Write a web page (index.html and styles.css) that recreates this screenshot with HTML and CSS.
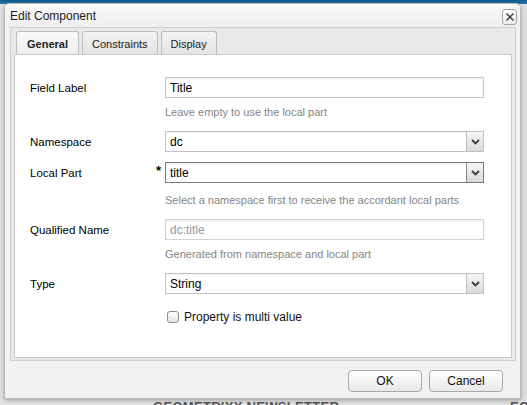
FILE: index.html
```html
<!DOCTYPE html>
<html>
<head>
<meta charset="utf-8">
<link rel="stylesheet" href="styles.css">
</head>
<body>
<div class="page">
  <div class="topbar"></div>
  <div class="behind-bottom"><span class="news">GEOMETRIXX NEWSLETTER</span><span class="news news-r">EO</span></div>

  <div class="dialog">
    <div class="dlg-head">
      <span class="dlg-title">Edit Component</span>
      <div class="close">
        <svg width="10" height="10" viewBox="0 0 10 10"><path d="M1.5 1.5 L8.5 8.5 M8.5 1.5 L1.5 8.5" stroke="#3a3a3a" stroke-width="1.4" fill="none"/></svg>
      </div>
    </div>

    <div class="panel">
      <div class="tabs">
        <div class="tab active">General</div>
        <div class="tab">Constraints</div>
        <div class="tab">Display</div>
      </div>
      <div class="tab-body">
        <div class="form">
          <div class="row">
            <div class="label">Field Label</div>
            <div class="field input">Title</div>
          </div>
          <div class="help help-a">Leave empty to use the local part</div>

          <div class="row row-gap-a">
            <div class="label">Namespace</div>
            <div class="field select"><span class="val">dc</span><span class="arrow"><svg width="9" height="6" viewBox="0 0 9 6"><path d="M1 1 L4.5 4.5 L8 1" stroke="#3c3c3c" stroke-width="1.8" fill="none"/></svg></span></div>
          </div>
          <div class="row row-gap-b">
            <div class="label">Local Part<span class="req">*</span></div>
            <div class="field select focus"><span class="val">title</span><span class="arrow"><svg width="9" height="6" viewBox="0 0 9 6"><path d="M1 1 L4.5 4.5 L8 1" stroke="#3c3c3c" stroke-width="1.8" fill="none"/></svg></span></div>
          </div>
          <div class="help help-b">Select a namespace first to receive the accordant local parts</div>

          <div class="row row-gap-a">
            <div class="label">Qualified Name</div>
            <div class="field input disabled">dc:title</div>
          </div>
          <div class="help help-a">Generated from namespace and local part</div>

          <div class="row row-gap-a">
            <div class="label">Type</div>
            <div class="field select"><span class="val">String</span><span class="arrow"><svg width="9" height="6" viewBox="0 0 9 6"><path d="M1 1 L4.5 4.5 L8 1" stroke="#3c3c3c" stroke-width="1.8" fill="none"/></svg></span></div>
          </div>
          <div class="check-row">
            <span class="checkbox"></span>
            <span class="check-label">Property is multi value</span>
          </div>
        </div>
      </div>
    </div>

    <div class="footer">
      <div class="btn">OK</div>
      <div class="btn">Cancel</div>
    </div>
  </div>
</div>
</body>
</html>
```

FILE: styles.css
```css
html, body {
  margin: 0;
  padding: 0;
}
body {
  width: 527px;
  height: 405px;
  overflow: hidden;
  background: #e8e8e8;
  font-family: "Liberation Sans", Arial, sans-serif;
}
.page {
  position: relative;
  width: 527px;
  height: 405px;
  overflow: hidden;
  background: linear-gradient(to right, #e4e4e4 0, #f0f0f0 5px, #f0f0f0 520px, #dcdcdc 527px);
}
.topbar {
  height: 4px;
  background: linear-gradient(#0d5d92, #2a79ab);
}
.behind-bottom {
  position: absolute;
  left: 0;
  top: 396px;
  width: 527px;
  height: 9px;
  background: #e4e4e4;
}
.news {
  position: absolute;
  left: 153px;
  top: 4px;
  font-size: 13px;
  line-height: 13px;
  font-weight: bold;
  color: #555;
  letter-spacing: 0.3px;
}
.news-r {
  left: 510px;
}

/* dialog window */
.dialog {
  position: absolute;
  left: 4px;
  top: 3px;
  width: 517px;
  height: 396px;
  box-sizing: border-box;
  border: 1px solid #b9b9b9;
  border-radius: 5px 5px 2px 2px;
  background: #f2f2f2;
  box-shadow: 0 1px 5px rgba(0, 0, 0, 0.35);
  display: flex;
  flex-direction: column;
}
.dlg-head {
  height: 23px;
  display: flex;
  align-items: center;
  justify-content: space-between;
  padding: 0 3px 0 5px;
  background: linear-gradient(#f8f8f8, #efefef);
  border-radius: 5px 5px 0 0;
}
.dlg-title {
  font-size: 12px;
  color: #1e1e1e;
  margin-top: 1px;
}
.close {
  width: 13px;
  height: 14px;
  border: 1px solid #a5a5a5;
  border-radius: 3px;
  background: linear-gradient(#fdfdfd, #ececec);
  display: flex;
  align-items: center;
  justify-content: center;
  margin-top: 2px;
}

/* tab panel */
.panel {
  margin: 0 4px 0 5px;
  height: 334px;
  box-sizing: border-box;
  border: 1px solid #cecece;
  background: #e9e9e9;
  padding: 3px 3px 2px 3px;
  display: flex;
  flex-direction: column;
}
.tabs {
  display: flex;
  gap: 3px;
  padding-left: 2px;
  height: 23px;
}
.tab {
  height: 23px;
  box-sizing: border-box;
  border: 1px solid #bdbdbd;
  border-bottom: none;
  border-radius: 3px 3px 0 0;
  background: linear-gradient(#f3f3f3, #e4e4e4);
  font-size: 11px;
  color: #222;
  padding: 0 9px;
  display: flex;
  align-items: center;
  padding-top: 1px;
}
.tab.active {
  font-weight: bold;
  background: linear-gradient(#fafafa, #ededed);
  padding: 1px 10px 0 10px;
}
.tab-body {
  flex: 1;
  background: #fff;
  border: 1px solid #c9c9c9;
}

/* form */
.form {
  padding: 22px 0 0 15px;
  display: flex;
  flex-direction: column;
}
.row {
  display: grid;
  grid-template-columns: 135px 319px;
  align-items: center;
}
.row-gap-a { margin-top: 12px; }
.row-gap-b { margin-top: 10px; }
.label {
  font-size: 11.5px;
  color: #000;
  display: flex;
  justify-content: space-between;
  padding-right: 4px;
  padding-top: 1px;
}
.req {
  font-size: 13px;
  font-weight: bold;
  line-height: 11px;
  margin-top: -2px;
}
.field {
  height: 21px;
  box-sizing: border-box;
  border: 1px solid #c3c3c3;
  background: #fff;
  box-shadow: inset 0 1px 2px rgba(0, 0, 0, 0.07);
  font-size: 12px;
  color: #000;
}
.input {
  padding: 0 4px;
  line-height: 20px;
}
.input.disabled {
  color: #999;
  border-color: #d2d2d2;
}
.select {
  display: flex;
  align-items: stretch;
}
.select .val {
  flex: 1;
  padding: 0 4px;
  line-height: 20px;
}
.select .arrow {
  width: 16px;
  border-left: 1px solid #bcbcbc;
  background: linear-gradient(#f6f6f6, #d9d9d9);
  display: flex;
  align-items: center;
  justify-content: center;
}
.select.focus {
  border-color: #7b7b7b;
}
.select.focus .arrow {
  border-left-color: #8a8a8a;
}
.help {
  font-size: 11px;
  line-height: 14px;
  color: #858585;
  margin-left: 135px;
}
.help-a { margin-top: 7px; }
.help-b { margin-top: 10px; }

.check-row {
  margin: 15px 0 0 137px;
  display: flex;
  align-items: center;
  gap: 5px;
  height: 16px;
}
.checkbox {
  width: 12px;
  height: 12px;
  box-sizing: border-box;
  border: 1px solid #8e8e8e;
  border-radius: 3px;
  background: linear-gradient(#ffffff, #e4e4e4);
}
.check-label {
  font-size: 12px;
  color: #111;
}

/* footer */
.footer {
  display: flex;
  justify-content: flex-end;
  gap: 7px;
  padding: 9px 17px 0 0;
}
.btn {
  width: 74px;
  height: 22px;
  box-sizing: border-box;
  border: 1px solid #a8a8a8;
  border-radius: 4px;
  background: linear-gradient(#ffffff, #e8e8e8);
  font-size: 12px;
  color: #111;
  display: flex;
  align-items: center;
  justify-content: center;
}
```
